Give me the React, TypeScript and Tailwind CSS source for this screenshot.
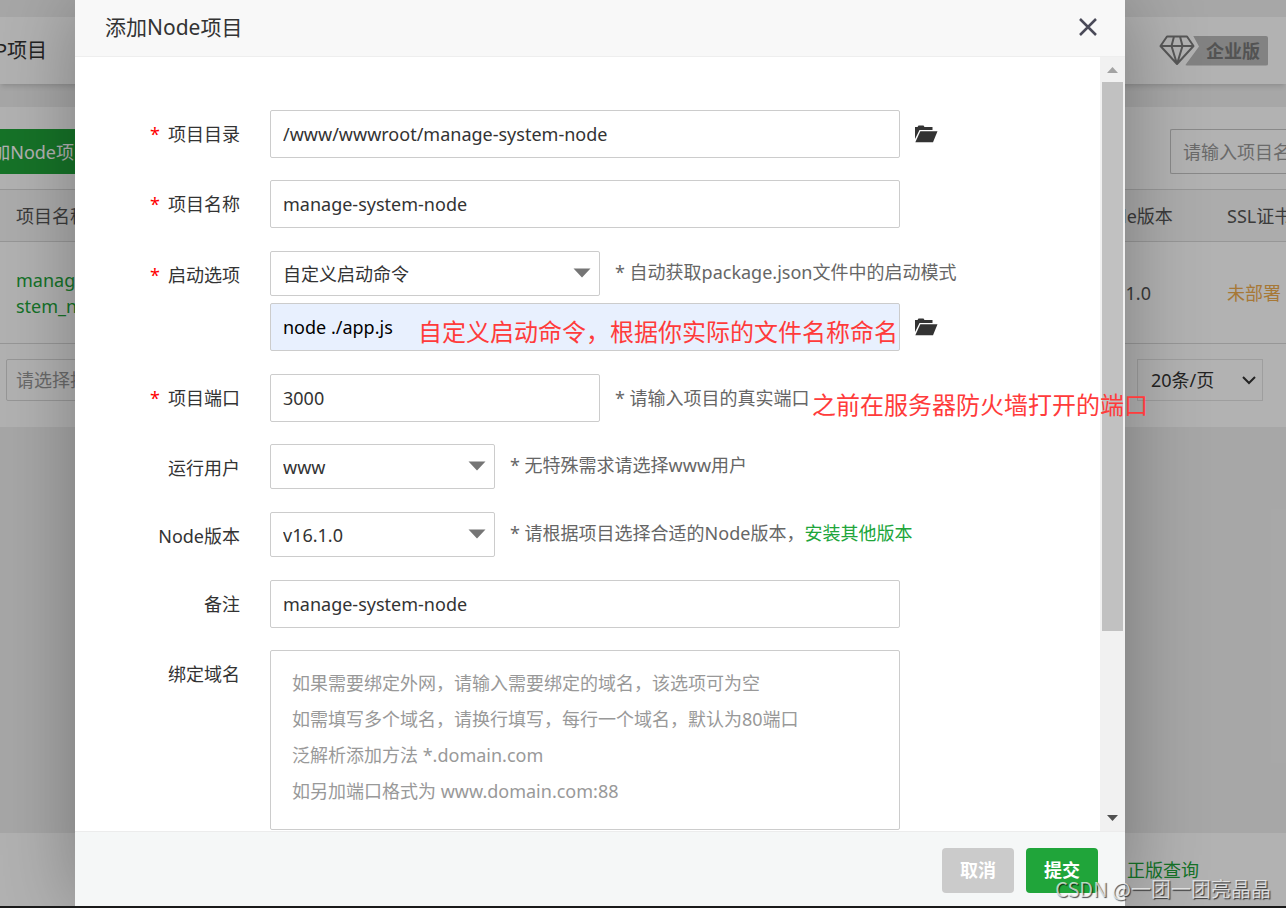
import { ReactNode, useState } from "react";
import clsx from "clsx";

const DOMAIN_PLACEHOLDER = [
  "如果需要绑定外网，请输入需要绑定的域名，该选项可为空",
  "如需填写多个域名，请换行填写，每行一个域名，默认为80端口",
  "泛解析添加方法 *.domain.com",
  "如另加端口格式为 www.domain.com:88",
].join("\n");

const inputClass =
  "h-12 rounded-xs border border-[#ccc] bg-white px-3 text-lg text-[#333] outline-none";

function FolderIcon() {
  return (
    <svg width="24" height="18" viewBox="0 0 24 18" fill="#333">
      <path d="M1 13V2h2.500l1-1.400h5l1 1.400H18.500v3H5.500L1 14z" />
      <path d="M6.300 6.300H23.500L19 17.300H1.300z" />
    </svg>
  );
}

function DiamondIcon() {
  return (
    <svg
      width="36"
      height="31"
      viewBox="0 0 36 31"
      fill="none"
      stroke="#7d7d7d"
      strokeWidth="2"
      strokeLinejoin="round"
    >
      <path d="M8 1.500H28L34.500 11 18 29 1.500 11zM1.500 11H34.500M12.500 11L18 29 23.500 11M15 1.500L12.500 11M21 1.500L23.500 11" />
    </svg>
  );
}

type RowProps = {
  id: string;
  label: string;
  required?: boolean;
  children: ReactNode;
};

function FormRow({ id, label, required, children }: RowProps) {
  return (
    <div className="flex items-start">
      <label
        htmlFor={id}
        className="mr-[30px] h-[46px] w-[165px] shrink-0 text-right leading-[48px]"
      >
        {required && <span className="mr-2 text-[#f00]">*</span>}
        {label}
      </label>
      {children}
    </div>
  );
}

type SelectProps = {
  id: string;
  options: string[];
  wide?: boolean;
};

function FormSelect({ id, options, wide }: SelectProps) {
  return (
    <div className={clsx("relative shrink-0", wide ? "w-[330px]" : "w-[225px]")}>
      <select
        id={id}
        className="block h-[45px] w-full appearance-none rounded-xs border border-[#ccc] bg-white px-3 text-lg text-[#333] outline-none"
      >
        {options.map((option) => (
          <option key={option}>{option}</option>
        ))}
      </select>
      <svg
        className="pointer-events-none absolute top-[17px] right-[9px]"
        width="18"
        height="10"
        viewBox="0 0 18 10"
        fill="#757575"
      >
        <path d="M0.500 0.500H17.500L9 9.500z" />
      </svg>
    </div>
  );
}

function Hint({ tall, children }: { tall?: boolean; children: ReactNode }) {
  return (
    <span
      className={clsx(
        "ml-[15px] whitespace-nowrap text-[#666]",
        tall ? "leading-[48px]" : "leading-[42px]"
      )}
    >
      {children}
    </span>
  );
}

function ProjectPage() {
  return (
    <div className="flex h-full flex-col bg-[#f0f0f0] pt-[17px]">
      <header className="flex h-[67px] shrink-0 items-center justify-between bg-white pr-[18px] shadow-md">
        <a
          href="#php"
          className="flex w-[47px] justify-end overflow-hidden text-xl whitespace-nowrap text-[#333]"
        >
          PHP项目
        </a>
        <div className="flex items-center">
          <DiamondIcon />
          <span className="-ml-[10px] flex h-[30px] w-[83px] items-center justify-end rounded-xs bg-[#bababa] pr-2 font-bold text-[#777] [clip-path:polygon(8px_0,100%_0,100%_100%,0_100%,14px_11px)]">
            企业版
          </span>
        </div>
      </header>

      <main className="mt-[23px] shrink-0 overflow-hidden bg-white">
        <div className="flex justify-between pt-[22px] pb-[15px]">
          <button className="flex h-[45px] w-[107px] items-center justify-end overflow-hidden bg-[#20a53a] pr-[15px] whitespace-nowrap text-white">
            添加Node项目
          </button>
          <input
            aria-label="搜索项目"
            placeholder="请输入项目名称"
            className="h-[45px] w-[116px] rounded-l-xs border border-r-0 border-[#c4c4c4] pl-3 placeholder:text-[#999]"
          />
        </div>
        <table className="w-full table-fixed border-collapse text-left whitespace-nowrap text-[#555]">
          <thead>
            <tr className="h-[52px] border-y border-[#d8d8d8] bg-[#f6f6f6]">
              <th className="w-[130px] pl-4 font-normal">项目名称</th>
              <th></th>
              <th className="w-[136px] pl-[15px] font-normal">Node版本</th>
              <th className="w-[74px] pl-[15px] font-normal">SSL证书</th>
            </tr>
          </thead>
          <tbody>
            <tr className="h-[102px] border-b border-[#d8d8d8]">
              <td className="pl-4 leading-[26px] text-[#20a53a]">
                manage_sy
                <br />
                stem_node
              </td>
              <td></td>
              <td className="pl-[15px]">v16.1.0</td>
              <td className="pl-[15px] text-[#f0ad4e]">未部署</td>
            </tr>
          </tbody>
        </table>
        <div className="flex justify-between pt-[15px] pr-[23px] pb-[26px] pl-[6px]">
          <select
            aria-label="批量操作"
            className="h-[42px] w-[160px] appearance-none rounded-xs border border-[#d8d8d8] pl-[9px] text-[#999]"
          >
            <option>请选择批量操作</option>
          </select>
          <div className="relative">
            <select
              aria-label="每页条数"
              className="h-[42px] w-[126px] appearance-none border border-[#e2e2e2] pl-[13px] text-[#333]"
            >
              <option>20条/页</option>
            </select>
            <svg
              className="pointer-events-none absolute top-[17px] right-[7px]"
              width="14"
              height="9"
              viewBox="0 0 14 9"
              fill="none"
              stroke="#333"
              strokeWidth="2"
            >
              <path d="M1 1l6 6 6-6" />
            </svg>
          </div>
        </div>
      </main>

      <footer className="mt-auto flex h-[73px] shrink-0 items-center justify-end bg-white pr-[87px]">
        <a href="#license" className="text-[#20a53a]">
          正版查询
        </a>
      </footer>
    </div>
  );
}

function Scrollbar() {
  return (
    <div className="flex w-[25px] shrink-0 flex-col items-center bg-[#f1f1f1] pr-px">
      <svg width="25" height="25" viewBox="0 0 25 25" fill="#a3a3a3" className="shrink-0">
        <path d="M7 16L12.500 10 18 16z" />
      </svg>
      <div className="h-[549px] w-[21px] bg-[#c1c1c1]" />
      <svg width="25" height="25" viewBox="0 0 25 25" fill="#505050" className="mt-auto shrink-0">
        <path d="M7 9H18L12.500 15z" />
      </svg>
    </div>
  );
}

function AddNodeDialog() {
  const [path, setPath] = useState("/www/wwwroot/manage-system-node");
  const [name, setName] = useState("manage-system-node");
  const [command, setCommand] = useState("node ./app.js");
  const [port, setPort] = useState("3000");
  const [remark, setRemark] = useState("manage-system-node");

  return (
    <div
      role="dialog"
      aria-label="添加Node项目"
      className="relative flex h-full w-[1050px] flex-col bg-white text-[#333] shadow-[1px_1px_75px_rgba(0,0,0,0.3)]"
    >
      <div className="flex h-[57px] shrink-0 items-center justify-between border-b border-[#eee] bg-[#f8f8f8] pr-7 pb-[2px] pl-[30px]">
        <h2 className="text-[21px] leading-[54px]">添加Node项目</h2>
        <button aria-label="关闭">
          <svg width="18" height="18" viewBox="0 0 18 18" stroke="#4a4a58" strokeWidth="2.500">
            <path d="M1 1L17 17M17 1L1 17" />
          </svg>
        </button>
      </div>

      <div className="flex min-h-0 flex-1">
        <form className="flex flex-1 flex-col gap-[22px] overflow-hidden pt-[53px]">
          <FormRow id="path" label="项目目录" required>
            <input
              id="path"
              value={path}
              onChange={(e) => setPath(e.target.value)}
              className={clsx(inputClass, "w-[630px]")}
            />
            <button type="button" aria-label="选择目录" className="ml-[14px] self-center">
              <FolderIcon />
            </button>
          </FormRow>

          <FormRow id="name" label="项目名称" required>
            <input
              id="name"
              value={name}
              onChange={(e) => setName(e.target.value)}
              className={clsx(inputClass, "w-[630px]")}
            />
          </FormRow>

          <div className="flex flex-col gap-[6px] py-px">
            <FormRow id="start" label="启动选项" required>
              <FormSelect id="start" wide options={["自定义启动命令"]} />
              <Hint>* 自动获取package.json文件中的启动模式</Hint>
            </FormRow>
            <div className="flex items-center pl-[195px]">
              <input
                aria-label="启动命令"
                value={command}
                onChange={(e) => setCommand(e.target.value)}
                className="h-12 w-[630px] rounded-xs border border-[#ccc] bg-[#e8f0fe] px-3 text-lg text-black outline-none"
              />
              <button type="button" aria-label="选择文件" className="ml-[14px]">
                <FolderIcon />
              </button>
            </div>
          </div>

          <FormRow id="port" label="项目端口" required>
            <input
              id="port"
              value={port}
              onChange={(e) => setPort(e.target.value)}
              className={clsx(inputClass, "w-[330px]")}
            />
            <Hint tall>* 请输入项目的真实端口</Hint>
          </FormRow>

          <FormRow id="user" label="运行用户">
            <FormSelect id="user" options={["www", "root"]} />
            <Hint>* 无特殊需求请选择www用户</Hint>
          </FormRow>

          <FormRow id="version" label="Node版本">
            <FormSelect id="version" options={["v16.1.0"]} />
            <Hint>
              * 请根据项目选择合适的Node版本，
              <a href="#install" className="text-[#20a53a]">
                安装其他版本
              </a>
            </Hint>
          </FormRow>

          <FormRow id="remark" label="备注">
            <input
              id="remark"
              value={remark}
              onChange={(e) => setRemark(e.target.value)}
              className={clsx(inputClass, "w-[630px]")}
            />
          </FormRow>

          <FormRow id="domains" label="绑定域名">
            <textarea
              id="domains"
              placeholder={DOMAIN_PLACEHOLDER}
              className="block h-[180px] w-[630px] resize-none rounded-xs border border-[#ccc] px-[21px] py-[14px] text-lg leading-9 outline-none placeholder:text-[#999]"
            />
          </FormRow>
        </form>
        <Scrollbar />
      </div>

      <div className="flex h-[75px] shrink-0 items-center justify-end gap-3 border-t border-[#ececec] bg-[#f5f7f7] pt-[2px] pr-[27px]">
        <button className="h-[45px] w-[72px] rounded bg-[#cbcbcb] font-bold text-white">
          取消
        </button>
        <button className="h-[45px] w-[72px] rounded bg-[#20a53a] font-bold text-white">
          提交
        </button>
      </div>

      {/* notes written over the form */}
      <p className="pointer-events-none absolute top-[314px] left-[343px] text-2xl leading-9 whitespace-nowrap text-[#ff3b3b]">
        自定义启动命令，根据你实际的文件名称命名
      </p>
      <p className="pointer-events-none absolute top-[387px] left-[737px] text-2xl leading-9 whitespace-nowrap text-[#ff3b3b]">
        之前在服务器防火墙打开的端口
      </p>
    </div>
  );
}

export default function App() {
  return (
    <div
      lang="zh-CN"
      className="flex h-screen flex-col overflow-hidden bg-[#1a1a1a] font-['Noto_Sans','Noto_Sans_CJK_SC',sans-serif] text-lg"
    >
      <div className="relative mb-[2px] min-h-0 flex-1 overflow-hidden">
        <ProjectPage />
        <div className="absolute inset-0 bg-black/30 pl-[75px]">
          <AddNodeDialog />
        </div>
      </div>
      <p className="pointer-events-none absolute right-[15px] bottom-[4px] font-['Noto_Sans_CJK_SC',sans-serif] text-xl leading-[30px] text-white/70 [text-shadow:1px_1px_1px_rgba(0,0,0,0.7)]">
        CSDN @一团一团亮晶晶
      </p>
    </div>
  );
}
